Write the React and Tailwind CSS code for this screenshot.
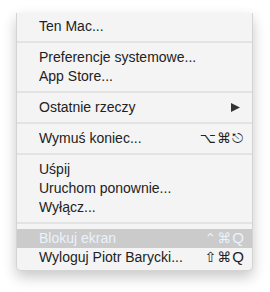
import { Fragment } from "react";

const groups = [
  [{ label: "Ten Mac..." }],
  [{ label: "Preferencje systemowe..." }, { label: "App Store..." }],
  [{ label: "Ostatnie rzeczy", submenu: true }],
  [{ label: "Wymuś koniec...", mods: "⌥⌘⎋" }],
  [{ label: "Uśpij" }, { label: "Uruchom ponownie..." }, { label: "Wyłącz..." }],
  [
    { label: "Blokuj ekran", mods: "⌃⌘", key: "Q", active: true },
    { label: "Wyloguj Piotr Barycki...", mods: "⇧⌘", key: "Q" },
  ],
];

function MenuItem({ item }) {
  return (
    <div
      className={
        "flex h-[19px] items-center justify-between pl-[22px] pr-[8px] " +
        (item.active ? "bg-[#cbcbcb] text-[#eaf2fd]" : "text-[#222]")
      }
    >
      <span>{item.label}</span>
      {item.mods && (
        <span className="flex items-center">
          <span className="font-['DejaVu_Sans',sans-serif] text-[14px] tracking-[1px]">
            {item.mods}
          </span>
          {item.key && <span className="text-[15px]">{item.key}</span>}
        </span>
      )}
      {item.submenu && (
        <svg width="9" height="9" viewBox="0 0 9 9" className="mr-[4px]">
          <path d="M0 0 L9 4.5 L0 9 Z" fill="#333" />
        </svg>
      )}
    </div>
  );
}

export default function App() {
  return (
    <div className="h-[292px] w-[270px] bg-white pl-[16px] pt-[13px] font-['Liberation_Sans',Arial,sans-serif] text-[14px]">
      <div className="w-[237px] rounded-b-[5px] border-x border-b border-[#d4d4d4] bg-[#f4f4f4] pt-[4px] pb-[3px] shadow-[0_6px_14px_rgba(0,0,0,0.22)]">
        {groups.map((group, i) => (
          <Fragment key={i}>
            {i > 0 && (
              <div className="flex h-[12px] items-center">
                <div className="h-[2px] w-full bg-[#e3e3e3]" />
              </div>
            )}
            {group.map((item) => (
              <MenuItem key={item.label} item={item} />
            ))}
          </Fragment>
        ))}
      </div>
    </div>
  );
}
